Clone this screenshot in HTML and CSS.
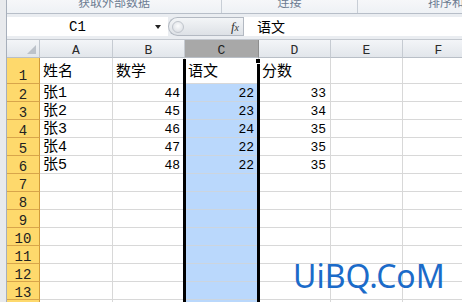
FILE: index.html
```html
<!DOCTYPE html>
<html>
<head>
<meta charset="utf-8">
<link rel="stylesheet" href="styles.css">
</head>
<body>
<div class="app">
  <div class="ribbon">
    <div class="rg g1"><span>获取外部数据</span></div>
    <div class="rg g2"><span>连接</span></div>
    <div class="rg g3"><span>排序和筛选</span></div>
  </div>
  <div class="fbar">
    <div class="namebox"><span class="nm">C1</span><span class="dd"></span></div>
    <div class="pill"><span class="knob"></span><span class="fx">f<span class="fxx">x</span></span></div>
    <div class="formula">语文</div>
  </div>
  <div class="sheet">
    <div class="corner"><span class="tri"></span></div>
    <div class="h">A</div><div class="h">B</div><div class="h hs">C</div><div class="h">D</div><div class="h">E</div><div class="h">F</div>

    <div class="r r1">1</div><div class="c t1">姓名</div><div class="c t1">数学</div><div class="c t1 act">语文</div><div class="c t1">分数</div><div class="c"></div><div class="c"></div>
    <div class="r">2</div><div class="c">张1</div><div class="c n">44</div><div class="c n s">22</div><div class="c n">33</div><div class="c"></div><div class="c"></div>
    <div class="r">3</div><div class="c">张2</div><div class="c n">45</div><div class="c n s">23</div><div class="c n">34</div><div class="c"></div><div class="c"></div>
    <div class="r">4</div><div class="c">张3</div><div class="c n">46</div><div class="c n s">24</div><div class="c n">35</div><div class="c"></div><div class="c"></div>
    <div class="r">5</div><div class="c">张4</div><div class="c n">47</div><div class="c n s">22</div><div class="c n">35</div><div class="c"></div><div class="c"></div>
    <div class="r">6</div><div class="c">张5</div><div class="c n">48</div><div class="c n s">22</div><div class="c n">35</div><div class="c"></div><div class="c"></div>
    <div class="r">7</div><div class="c"></div><div class="c"></div><div class="c s"></div><div class="c"></div><div class="c"></div><div class="c"></div>
    <div class="r">8</div><div class="c"></div><div class="c"></div><div class="c s"></div><div class="c"></div><div class="c"></div><div class="c"></div>
    <div class="r">9</div><div class="c"></div><div class="c"></div><div class="c s"></div><div class="c"></div><div class="c"></div><div class="c"></div>
    <div class="r">10</div><div class="c"></div><div class="c"></div><div class="c s"></div><div class="c"></div><div class="c"></div><div class="c"></div>
    <div class="r">11</div><div class="c"></div><div class="c"></div><div class="c s"></div><div class="c"></div><div class="c"></div><div class="c"></div>
    <div class="r">12</div><div class="c"></div><div class="c"></div><div class="c s"></div><div class="c"></div><div class="c"></div><div class="c"></div>
    <div class="r">13</div><div class="c"></div><div class="c"></div><div class="c s"></div><div class="c"></div><div class="c"></div><div class="c"></div>
    <div class="r">14</div><div class="c"></div><div class="c"></div><div class="c s"></div><div class="c"></div><div class="c"></div><div class="c"></div>

    <div class="selbox"><span class="handle"></span></div>
    <div class="wm">UiBQ.CoM</div>
  </div>
</div>
</body>
</html>
```

FILE: styles.css
```css
* { box-sizing: border-box; margin: 0; padding: 0; }
html, body { width: 462px; height: 302px; overflow: hidden; }
body {
  background: #e8eaed;
  font-family: "Liberation Mono", "Noto Sans CJK SC", monospace;
  color: #000;
}
.app {
  margin-left: 6px;
  border-left: 1px solid #a7afbb;
  height: 302px;
  display: flex;
  flex-direction: column;
  background: #fff;
  overflow: hidden;
}

/* ribbon strip */
.ribbon {
  height: 14px;
  flex: none;
  display: flex;
  background: linear-gradient(#f6f7f9, #eef1f5);
  border-bottom: 1px solid #b7bec8;
  overflow: hidden;
}
.rg {
  flex: none;
  display: flex;
  justify-content: center;
  border-right: 1px solid #c8ced6;
  font: 12px/12px "Noto Sans CJK SC", sans-serif;
  color: #6c7c92;
}
.rg span { margin-top: -4px; }
.g1 { width: 215px; }
.g2 { width: 136px; }
.g3 { width: 200px; border-right: 0; }

/* formula bar */
.fbar {
  height: 26px;
  flex: none;
  display: flex;
  align-items: flex-start;
  padding-top: 3px;
  background: #eaedf1;
  border-bottom: 1px solid #c3c8cf;
}
.namebox {
  width: 161px;
  height: 19px;
  background: #fff;
  display: flex;
  align-items: center;
}
.nm {
  flex: 1;
  text-align: center;
  font-size: 14px;
  padding-right: 7px;
}
.dd {
  width: 0;
  height: 0;
  border-left: 3.5px solid transparent;
  border-right: 3.5px solid transparent;
  border-top: 4px solid #222;
  margin-right: 7px;
}
.pill {
  width: 75px;
  height: 19px;
  background: linear-gradient(#f3f5f7, #dde1e6);
  border: 1px solid #b3b9c2;
  border-right: 0;
  border-radius: 10px 0 0 10px;
  display: flex;
  align-items: center;
  justify-content: space-between;
  padding: 0 4px 0 3px;
}
.knob {
  width: 12px;
  height: 12px;
  border-radius: 50%;
  background: radial-gradient(circle at 50% 40%, #fbfcfd, #d5d9df);
  border: 1px solid #c0c5cc;
}
.fx {
  font: italic 13px "Liberation Serif", serif;
  color: #333;
}
.fxx { font-size: 10px; }
.formula {
  flex: 1;
  height: 19px;
  background: #fff;
  border-left: 1px solid #b3b9c2;
  padding-left: 13px;
  font: 14px/19px "Noto Sans CJK SC", sans-serif;
}

/* sheet grid */
.sheet {
  flex: 1;
  position: relative;
  display: grid;
  grid-template-columns: 33px 73px 72px 74px 72px 72px 72px;
  grid-template-rows: 18px 26px repeat(13, 18px);
  overflow: hidden;
}
.corner {
  position: relative;
  background: linear-gradient(#f3f5f8, #e2e6eb);
  border-right: 1px solid #c0c6ce;
  border-bottom: 1px solid #b9bfc7;
}
.tri {
  position: absolute;
  right: 3px;
  bottom: 3px;
  width: 0;
  height: 0;
  border-left: 9px solid transparent;
  border-bottom: 9px solid #bcc2ca;
}
.h {
  background: linear-gradient(#f3f5f8, #e2e6eb);
  border-right: 1px solid #c6cbd2;
  border-bottom: 1px solid #b9bfc7;
  display: flex;
  align-items: center;
  justify-content: center;
  font-size: 13px;
  color: #2b2b2b;
  padding-top: 3px;
}
.hs {
  background: #a8a8a8;
  border-right-color: #8e8e8e;
  color: #222;
}
.r {
  background: #fed96c;
  border-right: 1px solid #d19b3a;
  border-bottom: 1px solid #d8a54b;
  display: flex;
  align-items: flex-end;
  justify-content: center;
  font-size: 14px;
  line-height: 12px;
  color: #222;
}
.r1 { padding-bottom: 1px; }
.c {
  border-right: 1px solid #d8d8d8;
  border-bottom: 1px solid #d8d8d8;
  display: flex;
  align-items: flex-end;
  padding: 0 3px 0 3px;
  font-size: 15px;
  line-height: 15px;
  white-space: nowrap;
  overflow: hidden;
}
.t1 { padding-bottom: 3px; }
.n {
  justify-content: flex-end;
  font-size: 13px;
  padding-right: 4px;
}
.s {
  background: #bad8fc;
  border-bottom-color: #ccd5de;
}
.act { background: #fff; padding-left: 3px; }

/* selection outline (overlays the grid) */
.selbox {
  position: absolute;
  left: 176px;
  top: 19px;
  width: 77px;
  height: 300px;
  border-left: 3px solid #000;
  border-right: 3px solid #000;
  pointer-events: none;
}
.handle {
  position: absolute;
  right: -4px;
  top: 0;
  width: 6px;
  height: 5px;
  background: #000;
  border: 1px solid #fff;
  border-top: 0;
}
.wm {
  position: absolute;
  left: 286px;
  top: 220px;
  font: 32px/32px "Noto Sans", sans-serif;
  color: #1b6bc9;
  white-space: nowrap;
}
```
